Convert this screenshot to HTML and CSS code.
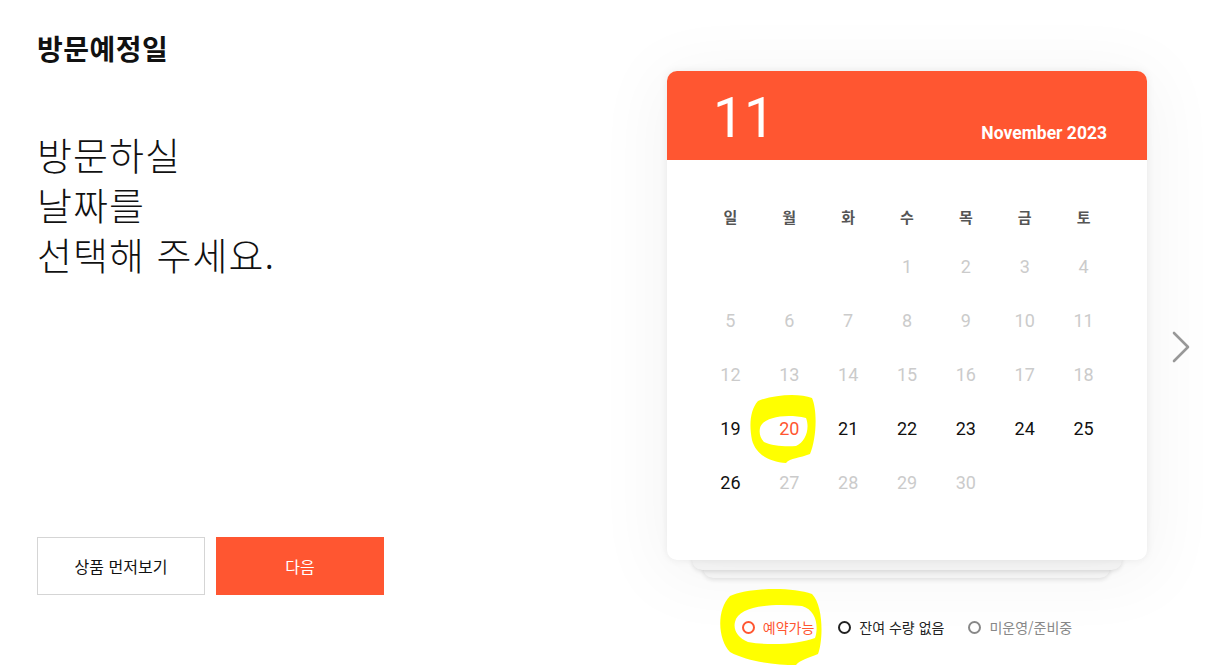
FILE: index.html
```html
<!DOCTYPE html>
<html lang="ko">
<head>
    <meta charset="UTF-8">
    <meta name="viewport" content="width=device-width, initial-scale=1.0">
    <title>방문예정일</title>
    <link rel="stylesheet" href="styles.css">
</head>
<body>

    <div class="page">
        <!-- 왼쪽 안내 -->
        <div class="intro">
            <h2 class="intro-title">방문예정일</h2>
            <p class="intro-text">방문하실<br>날짜를<br>선택해 주세요.</p>
            <div class="btns">
                <button class="btn btn-line">상품 먼저보기</button>
                <button class="btn btn-main">다음</button>
            </div>
        </div>

        <!-- 달력 -->
        <div class="picker">
            <div class="stack">
                <div class="cal">
                    <div class="cal-head">
                        <span class="cal-month">11</span>
                        <span class="cal-year">November 2023</span>
                    </div>
                    <div class="cal-body">
                        <div class="wk">일</div><div class="wk">월</div><div class="wk">화</div><div class="wk">수</div><div class="wk">목</div><div class="wk">금</div><div class="wk">토</div>

                        <div class="day"></div><div class="day"></div><div class="day"></div>
                        <div class="day off">1</div><div class="day off">2</div><div class="day off">3</div><div class="day off">4</div>

                        <div class="day off">5</div><div class="day off">6</div><div class="day off">7</div><div class="day off">8</div><div class="day off">9</div><div class="day off">10</div><div class="day off">11</div>

                        <div class="day off">12</div><div class="day off">13</div><div class="day off">14</div><div class="day off">15</div><div class="day off">16</div><div class="day off">17</div><div class="day off">18</div>

                        <div class="day">19</div><div class="day on">20</div><div class="day">21</div><div class="day">22</div><div class="day">23</div><div class="day">24</div><div class="day">25</div>

                        <div class="day">26</div><div class="day off">27</div><div class="day off">28</div><div class="day off">29</div><div class="day off">30</div>
                    </div>
                </div>
            </div>

            <div class="legend">
                <span class="lg lg-ok"><i></i>예약가능</span>
                <span class="lg lg-none"><i></i>잔여 수량 없음</span>
                <span class="lg lg-close"><i></i>미운영/준비중</span>
            </div>
        </div>

        <div class="next">
            <svg width="20" height="34" viewBox="0 0 20 34"><polyline points="3,3 17,17 3,31" fill="none" stroke="#9a9a9a" stroke-width="2.6" stroke-linecap="round" stroke-linejoin="round"/></svg>
        </div>
    </div>

    <!-- 형광펜 표시 -->
    <svg class="marks" width="1232" height="669" viewBox="0 0 1232 669">
        <path fill="#ffff00" fill-rule="evenodd" d="M758 401 C775 394 800 393 812 398 C818 412 816 440 810 454 C800 458 790 458 786 463 C770 462 756 455 752 440 C749 425 750 410 758 401 Z M760 428 C762 418 784 413 806 418 C810 428 806 442 796 446 C786 447 772 446 764 442 C760 438 759 433 760 428 Z"/>
        <path fill="#ffff00" fill-rule="evenodd" d="M730 596 C748 588 790 586 812 594 C824 606 823 642 818 654 C808 658 800 660 796 665 C776 665 748 662 730 652 C718 640 716 610 730 596 Z M735 622 C738 606 770 603 802 606 C816 610 819 626 815 638 C800 644 770 646 748 642 C738 638 733 630 735 622 Z"/>
    </svg>

</body>
</html>
```

FILE: styles.css
```css
* { margin: 0; padding: 0; box-sizing: border-box; }
body { background: #ffffff; font-family: "Noto Sans CJK KR", "Noto Sans", sans-serif; color: #111; overflow: hidden; position: relative; }

.page {
    display: flex;
    height: 669px;
}

/* 왼쪽 안내 */
.intro {
    width: 667px;
    flex-shrink: 0;
    padding: 29px 0 0 37px;
}

.intro-title {
    font-size: 28px;
    font-weight: 700;
    line-height: 38px;
    letter-spacing: 0.5px;
}

.intro-text {
    margin-top: 62px;
    font-size: 38px;
    font-weight: 300;
    line-height: 50px;
    letter-spacing: 1px;
}

.btns {
    display: flex;
    gap: 11px;
    margin-top: 258px;
}

.btn {
    width: 168px;
    height: 58px;
    font-family: "Noto Sans CJK KR", sans-serif;
    font-size: 16px;
    cursor: pointer;
}

.btn-line {
    background: #fff;
    border: 1px solid #d5d5d5;
    color: #111;
}

.btn-main {
    background: #ff5631;
    border: none;
    color: #fff;
}

/* 달력 */
.picker {
    width: 480px;
    flex-shrink: 0;
    padding-top: 71px;
}

.stack {
    position: relative;
}

.stack::before,
.stack::after {
    content: '';
    position: absolute;
    background: #f8f8f8;
    border-radius: 10px;
    box-shadow: 0 2px 4px rgba(0, 0, 0, 0.10);
}

.stack::before {
    left: 25px;
    right: 25px;
    top: 40px;
    bottom: -10px;
    z-index: 1;
}

.stack::after {
    left: 36px;
    right: 37px;
    top: 40px;
    bottom: -18px;
    z-index: 0;
}

.cal {
    position: relative;
    z-index: 2;
    background: #fff;
    border-radius: 10px;
    overflow: hidden;
    box-shadow: 0 0 8px rgba(0, 0, 0, 0.07), 0 10px 70px 10px rgba(0, 0, 0, 0.045);
}

.cal-head {
    height: 89px;
    background: #ff5631;
    color: #fff;
    display: flex;
    justify-content: space-between;
    align-items: flex-end;
    padding: 0 40px 18px 46px;
    font-family: Roboto, "Liberation Sans", sans-serif;
}

.cal-month {
    font-size: 55px;
    font-weight: 400;
    line-height: 55px;
    margin-bottom: -4px;
}

.cal-year {
    font-size: 17.5px;
    font-weight: 700;
    line-height: 17px;
}

.cal-body {
    display: grid;
    grid-template-columns: repeat(7, 1fr);
    grid-template-rows: 45px repeat(5, 54px);
    padding: 34px 34px 51px;
    font-family: Roboto, "Liberation Sans", sans-serif;
}

.wk {
    display: flex;
    justify-content: center;
    align-items: center;
    font-family: "Noto Sans CJK KR", sans-serif;
    font-size: 15px;
    font-weight: 700;
    color: #555;
}

.day {
    display: flex;
    justify-content: center;
    align-items: center;
    font-size: 18px;
    color: #111;
}

.day.off { color: #cbcbcb; }
.day.on { color: #ff5631; }

/* 범례 */
.legend {
    display: flex;
    justify-content: center;
    gap: 24px;
    margin-top: 57px;
    font-size: 14px;
    line-height: 20px;
}

.lg {
    display: flex;
    align-items: center;
    gap: 8px;
}

.lg i {
    width: 13px;
    height: 13px;
    border-radius: 50%;
    border: 2px solid;
}

.lg-ok { color: #ff5631; }
.lg-none { color: #222; }
.lg-close { color: #888; }

.next {
    padding: 330px 0 0 24px;
}

.marks {
    position: absolute;
    top: 0;
    left: 0;
    z-index: 10;
    pointer-events: none;
}
```
